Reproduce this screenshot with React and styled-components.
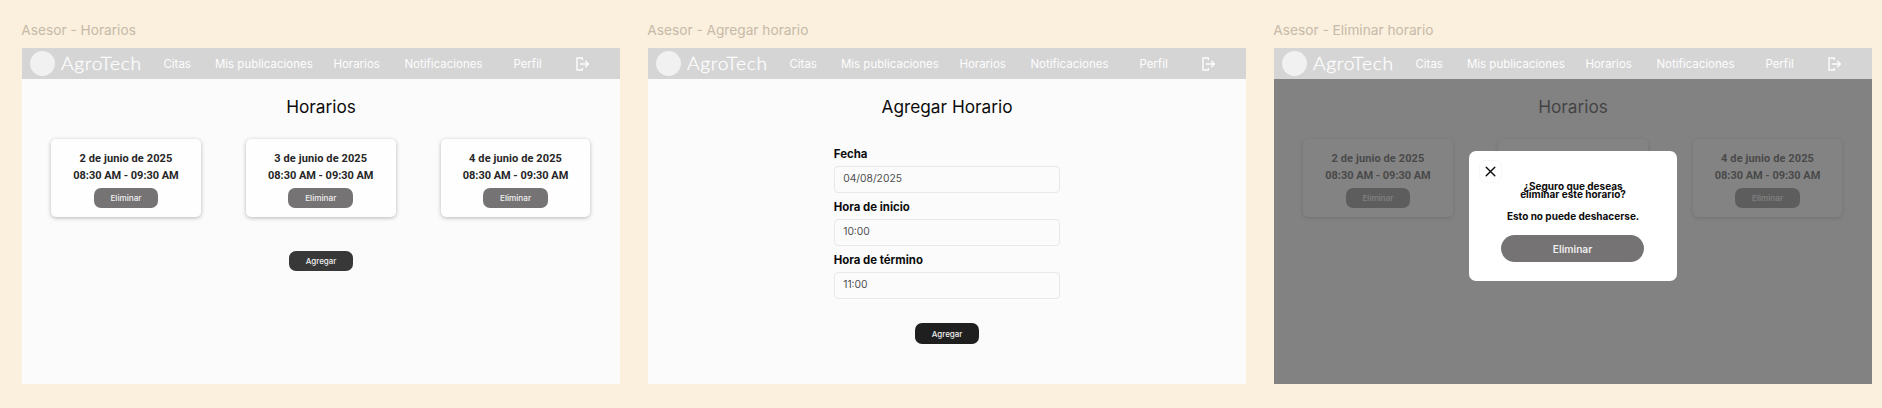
import React from "react";
import styled, { createGlobalStyle } from "styled-components";

const GlobalStyle = createGlobalStyle`
  *, *::before, *::after { box-sizing: border-box; }
  body { margin: 0; background: #fbefde; font-family: Inter, sans-serif; }
  button, input { font-family: inherit; margin: 0; }
`;

const Canvas = styled.main`
  display: flex;
  gap: 28.5px;
  width: 1882px;
  height: 408px;
  padding-left: 22.3px;
  overflow: hidden;
  background: #fbefde;
`;

const Artboard = styled.section`
  flex: none;
  width: 597.5px;
`;

const ArtboardName = styled.div`
  height: 48px;
  padding-top: 20px;
  margin-left: -1px;
  font-size: 13.7px;
  line-height: 20px;
  white-space: nowrap;
  color: #c6baa8;
`;

const Screen = styled.div`
  position: relative;
  height: 335.7px;
  background: #fbfbfb;
`;

const Header = styled.header`
  display: flex;
  align-items: center;
  height: 31.2px;
  padding-left: 7.5px;
  background: #d5d5d5;
  color: #fdfdfd;
`;

const Avatar = styled.span`
  flex: none;
  width: 25.4px;
  height: 25.4px;
  border-radius: 50%;
  background: #f1f1f1;
`;

const Brand = styled.span`
  flex: none;
  width: 102px;
  padding-left: 6px;
  font: 300 17px/24px Lato, sans-serif;
  letter-spacing: 0.55px;
  white-space: nowrap;
`;

const BrandName = styled.span`
  display: inline-block;
  transform: scaleX(1.135);
  transform-origin: left;
  -webkit-text-stroke: 0.3px #fdfdfd;
`;

const Nav = styled.nav`
  display: grid;
  grid-template-columns: 51.5px 118.5px 71px 109px 62.5px 14px;
  align-items: center;
  margin-left: 6.2px;
  font-size: 11.5px;
  line-height: 16px;
  white-space: nowrap;
`;

const Icon = styled.svg`
  display: block;
  fill: none;
  stroke: currentColor;
  stroke-width: 1.4;
  stroke-linecap: round;
  stroke-linejoin: round;
`;

const Title = styled.h1`
  margin: 16.4px 0 0;
  font-size: 17.25px;
  font-weight: 400;
  line-height: 22px;
  text-align: center;
  color: #0c0c0c;
`;

const Cards = styled.div`
  display: flex;
  justify-content: center;
  gap: 45.2px;
  margin-top: 21.1px;
  padding-right: 0.6px;
`;

const Card = styled.article`
  display: flex;
  flex-direction: column;
  align-items: center;
  width: 149.6px;
  height: 78px;
  padding-top: 11.2px;
  border-radius: 5px;
  background: #fefefe;
  box-shadow: 0 1px 4px rgba(0, 0, 0, 0.27);
`;

const CardLine = styled.div`
  font: 700 11px/17.6px Roboto, sans-serif;
  letter-spacing: ${(p) => p.$spacing}px;
  white-space: nowrap;
  color: #262626;
`;

const tones = { muted: "#767374", dark: "#383838", black: "#1f1f1f" };

const Button = styled.button`
  display: block;
  width: 64.6px;
  height: 20.2px;
  margin: ${(p) => p.$top}px auto 0;
  padding: 0;
  border: 0;
  border-radius: 7px;
  background: ${(p) => tones[p.$tone]};
  color: #f0f0f0;
  font-size: ${(p) => (p.$tone === "muted" ? 8.2 : 8)}px;
  font-weight: 500;
  line-height: 20px;
`;

const Form = styled.form`
  display: grid;
  gap: 6.3px;
  width: 226px;
  margin: 28.4px 0 0 185.5px;
`;

const Field = styled.label`
  display: grid;
  gap: 4.4px;
  font-size: 11.4px;
  font-weight: 700;
  line-height: 16px;
  color: #0c0c0c;
`;

const Input = styled.input`
  width: 100%;
  height: 26.3px;
  padding: 0 8.4px 3px;
  border: 1px solid #e8e8e8;
  border-radius: 4px;
  outline: 0;
  background: #fbfbfb;
  font-size: 10.3px;
  color: #505050;
`;

const Overlay = styled.div`
  position: absolute;
  inset: 31.2px 0 0;
  display: flex;
  justify-content: center;
  align-items: flex-start;
  padding-top: 71.8px;
  background: rgba(86, 86, 86, 0.735);
`;

const Dialog = styled.div`
  position: relative;
  display: flex;
  flex-direction: column;
  align-items: center;
  width: 207.8px;
  height: 130.4px;
  padding-top: 30.6px;
  border-radius: 7px;
  background: #fff;
  color: #0c0c0c;
`;

const CloseButton = styled.button`
  position: absolute;
  top: 9.5px;
  left: 10.3px;
  display: grid;
  place-items: center;
  width: 22.6px;
  height: 23px;
  padding: 0;
  border: 1px solid #f7f7f7;
  border-radius: 7px;
  background: #fff;
  color: #0c0c0c;
`;

const Question = styled.p`
  margin: 0;
  font-size: 10px;
  font-weight: 700;
  line-height: 8.4px;
  text-align: center;
  white-space: nowrap;
`;

const Warning = styled(Question)`
  margin-top: 12.6px;
  line-height: 10px;
`;

const ConfirmButton = styled.button`
  width: 143.6px;
  height: 27.6px;
  margin: 13.8px 1px 0 0;
  padding: 1px 0 0;
  border: 0;
  border-radius: 14px;
  background: #767374;
  color: #ececec;
  font-size: 10.2px;
  font-weight: 600;
  line-height: 26px;
`;

function AppHeader() {
  return (
    <Header>
      <Avatar />
      <Brand>
        <BrandName>AgroTech</BrandName>
      </Brand>
      <Nav>
        <span>Citas</span>
        <span>Mis publicaciones</span>
        <span>Horarios</span>
        <span>Notificaciones</span>
        <span>Perfil</span>
        <Icon width="14" height="14" viewBox="0 0 14 14">
          <path d="M6.4 2.6V1H1v12h5.4v-1.6M4.4 7h7.8M9.6 4.2 12.4 7 9.6 9.8" />
        </Icon>
      </Nav>
    </Header>
  );
}

function Schedule() {
  return (
    <>
      <Title>Horarios</Title>
      <Cards>
        {[2, 3, 4].map((day) => (
          <Card key={day}>
            <CardLine $spacing={0.1}>{day} de junio de 2025</CardLine>
            <CardLine $spacing={-0.03}>08:30 AM - 09:30 AM</CardLine>
            <Button $tone="muted" $top={2.8}>Eliminar</Button>
          </Card>
        ))}
      </Cards>
      <Button $tone="dark" $top={34.2}>Agregar</Button>
    </>
  );
}

function ConfirmDialog() {
  return (
    <Overlay>
      <Dialog>
        <CloseButton aria-label="Cerrar">
          <Icon width="11" height="11" viewBox="0 0 11 11">
            <path d="M1.2 1.2l8.6 8.6M9.8 1.2 1.2 9.8" />
          </Icon>
        </CloseButton>
        <Question>
          ¿Seguro que deseas
          <br />
          eliminar este horario?
        </Question>
        <Warning>Esto no puede deshacerse.</Warning>
        <ConfirmButton>Eliminar</ConfirmButton>
      </Dialog>
    </Overlay>
  );
}

const fields = [
  ["Fecha", "04/08/2025"],
  ["Hora de inicio", "10:00"],
  ["Hora de término", "11:00"],
];

export default function App() {
  return (
    <>
      <GlobalStyle />
      <Canvas>
        <Artboard>
          <ArtboardName>Asesor - Horarios</ArtboardName>
          <Screen>
            <AppHeader />
            <Schedule />
          </Screen>
        </Artboard>
        <Artboard>
          <ArtboardName>Asesor - Agregar horario</ArtboardName>
          <Screen>
            <AppHeader />
            <Title>Agregar Horario</Title>
            <Form>
              {fields.map(([label, value]) => (
                <Field key={label}>
                  {label}
                  <Input defaultValue={value} />
                </Field>
              ))}
            </Form>
            <Button $tone="black" $top={24.8}>Agregar</Button>
          </Screen>
        </Artboard>
        <Artboard>
          <ArtboardName>Asesor - Eliminar horario</ArtboardName>
          <Screen>
            <AppHeader />
            <Schedule />
            <ConfirmDialog />
          </Screen>
        </Artboard>
      </Canvas>
    </>
  );
}
